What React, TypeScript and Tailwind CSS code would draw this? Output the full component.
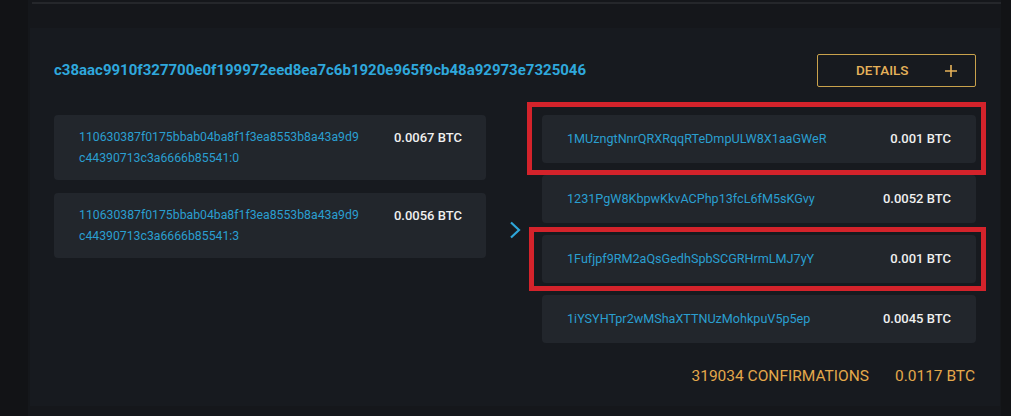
import React from 'react';

interface Input {
  hash: string;
  index: number;
  amount: string;
}

interface Output {
  address: string;
  amount: string;
  flagged?: 'a' | 'b';
}

const txHash = 'c38aac9910f327700e0f199972eed8ea7c6b1920e965f9cb48a92973e7325046';
const prevHash = '110630387f0175bbab04ba8f1f3ea8553b8a43a9d9';
const prevTail = 'c44390713c3a6666b85541';

const inputs: Input[] = [
  { hash: prevHash, index: 0, amount: '0.0067 BTC' },
  { hash: prevHash, index: 3, amount: '0.0056 BTC' },
];

const outputs: Output[] = [
  { address: '1MUzngtNnrQRXRqqRTeDmpULW8X1aaGWeR', amount: '0.001 BTC', flagged: 'a' },
  { address: '1231PgW8KbpwKkvACPhp13fcL6fM5sKGvy', amount: '0.0052 BTC' },
  { address: '1Fufjpf9RM2aQsGedhSpbSCGRHrmLMJ7yY', amount: '0.001 BTC', flagged: 'b' },
  { address: '1iYSYHTpr2wMShaXTTNUzMohkpuV5p5ep', amount: '0.0045 BTC' },
];

function Chevron() {
  return (
    <svg width="12" height="18" viewBox="0 0 12 18" fill="none">
      <polyline points="2,1.5 10,9 2,16.5" stroke="#2ea6d9" strokeWidth="2.2" />
    </svg>
  );
}

export default function App() {
  return (
    <div className="w-[1011px] h-[416px] overflow-hidden bg-[#121316] font-['Roboto',sans-serif]">
      <div className="ml-[28px] w-[973px] h-full bg-[#15171b] pt-[2px]">
        {/* top divider */}
        <div className="ml-[4px] h-[2px] bg-[#25272b]" />

        {/* Transaction card */}
        <div className="mt-[24px] ml-[2px] w-[970px] h-[378px] bg-[#171a1f] px-[24px] pt-[26px]">
          <div className="flex items-center justify-between h-[33px]">
            <span className="text-[15px] font-bold text-[#2fa8dc]">{txHash}</span>
            <button className="flex items-center w-[159px] h-[33px] border border-[#c9a24c] rounded-[2px] pl-[38px] pr-[18px] text-[13.5px] font-medium text-[#e6b25a]">
              <span>DETAILS</span>
              <svg className="ml-auto" width="12" height="12" viewBox="0 0 12 12">
                <path d="M6 0v12M0 6h12" stroke="#e6b25a" strokeWidth="1.6" />
              </svg>
            </button>
          </div>

          <div className="mt-[28px] grid grid-cols-[432px_56px_434px]">
            {/* Inputs */}
            <div className="flex flex-col gap-[13px]">
              {inputs.map((inp) => (
                <div
                  key={inp.index}
                  className="flex justify-between h-[65px] rounded-[4px] bg-[#22262c] pl-[25px] pr-[24px] pt-[12px]"
                >
                  <div className="text-[12.25px] leading-[21px] text-[#2a9fd0]">
                    <div>{inp.hash}</div>
                    <div>
                      {prevTail}:{inp.index}
                    </div>
                  </div>
                  <span className="text-[13px] leading-[21px] font-medium text-[#f0f0f0]">{inp.amount}</span>
                </div>
              ))}
            </div>

            <div className="flex items-center justify-center pt-[2px] pl-[2px]">
              <Chevron />
            </div>

            {/* Outputs */}
            <div className="flex flex-col gap-[12px]">
              {outputs.map((out) => (
                <div
                  key={out.address}
                  className="relative flex items-center justify-between h-[48px] rounded-[4px] bg-[#22262c] pl-[25px] pr-[25px]"
                >
                  <span className="text-[12.6px] text-[#2a9fd0]">{out.address}</span>
                  <span className="text-[13px] font-medium text-[#f0f0f0]">{out.amount}</span>
                  {out.flagged === 'a' && (
                    <div className="absolute -top-[13px] -bottom-[12px] -left-[15px] -right-[10px] border-[5px] border-[#d4232b]" />
                  )}
                  {out.flagged === 'b' && (
                    <div className="absolute -top-[8px] -bottom-[8px] -left-[13px] -right-[10px] border-[5px] border-[#d4232b]" />
                  )}
                </div>
              ))}
            </div>
          </div>

          <div className="mt-[23px] flex justify-end gap-[26px] pr-[1px] text-[15.5px] leading-[20px] text-[#e3a84b]">
            <span>319034 CONFIRMATIONS</span>
            <span>0.0117 BTC</span>
          </div>
        </div>
      </div>
    </div>
  );
}
